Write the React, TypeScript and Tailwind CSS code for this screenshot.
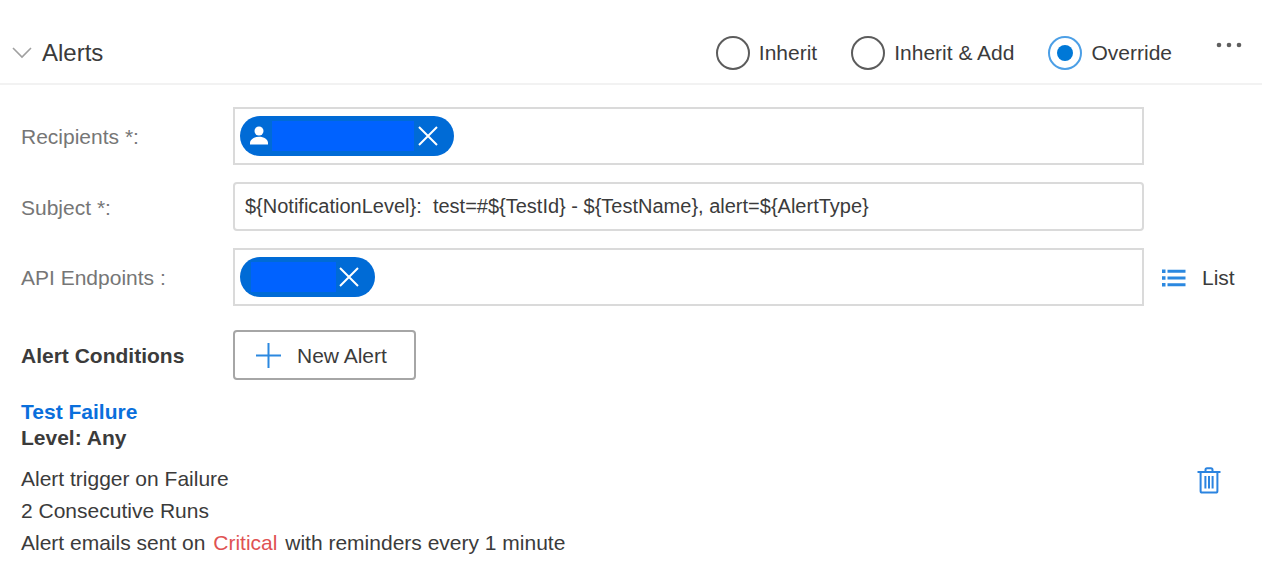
import { useState } from "react";

const modes = ["Inherit", "Inherit & Add", "Override"];

const CloseIcon = () => (
    <svg width="20" height="20" viewBox="0 0 20 20" fill="none" stroke="currentColor" strokeWidth="2" aria-hidden="true">
        <path d="M1 1l18 18M19 1L1 19" />
    </svg>
);

const ListIcon = () => (
    <svg width="24" height="18" viewBox="0 0 24 18" fill="currentColor" aria-hidden="true">
        <path d="M0 0.500h3.500v3.500H0zM5.500 0.800h18v3H5.500zM0 7.300h3.500v3.500H0zM5.500 7.500h18v3H5.500zM0 14h3.500v3.500H0zM5.500 14.200h18v3H5.500z" />
    </svg>
);

const TrashIcon = () => (
    <svg width="24" height="27" viewBox="0 0 24 27" fill="none" stroke="currentColor" aria-hidden="true">
        <path d="M0.500 5h23" strokeWidth="2" />
        <path d="M8.500 5V2.800c0-1 .6-1.600 1.600-1.600h3.800c1 0 1.600.6 1.600 1.600V5" strokeWidth="2" />
        <path d="M3.600 5v19c0 1 .6 1.600 1.600 1.600h13.600c1 0 1.600-.6 1.600-1.600V5" strokeWidth="2" />
        <path d="M8.400 9v12.500M12 9v12.500M15.600 9v12.500" strokeWidth="2" />
    </svg>
);

const App = () => {
    const [mode, setMode] = useState("Override");
    const [subject, setSubject] = useState("${NotificationLevel}:  test=#${TestId} - ${TestName}, alert=${AlertType}");

    return (
        <main className="bg-white font-['Liberation_Sans',Arial,sans-serif] text-[21px] leading-[26px] text-[#3b3b3b]">
            {/* Section header */}
            <header className="mr-3 flex items-start border-b-2 border-[#f2f2f2] pt-9 pb-[13px] pl-3">
                <button type="button" aria-expanded="true" className="flex h-[34px] items-center gap-2.5">
                    <svg width="20" height="12" viewBox="0 0 20 12" fill="none" stroke="#a0a0a0" strokeWidth="1.6" aria-hidden="true">
                        <path d="M1 1l9 9 9-9" />
                    </svg>
                    <span className="text-2xl">Alerts</span>
                </button>

                <div role="radiogroup" aria-label="Alert mode" className="ml-auto flex gap-[34px]">
                    {modes.map((item) => (
                        <label key={item} className="flex h-[34px] items-center gap-[9px]">
                            <input
                                type="radio"
                                name="mode"
                                value={item}
                                checked={mode === item}
                                onChange={() => setMode(item)}
                                className="grid size-[34px] appearance-none place-items-center rounded-full border-2 border-[#5c5c5c] before:size-4 before:rounded-full checked:border-[#4c9fe6] checked:before:bg-[#0078d7]"
                            />
                            {item}
                        </label>
                    ))}
                </div>

                <button type="button" aria-label="More options" className="mr-5 ml-11 flex h-[18px] items-center">
                    <svg width="26" height="6" viewBox="0 0 26 6" fill="#5f5f5f" aria-hidden="true">
                        <circle cx="3" cy="3" r="2.3" />
                        <circle cx="13" cy="3" r="2.3" />
                        <circle cx="23" cy="3" r="2.3" />
                    </svg>
                </button>
            </header>

            {/* Fields */}
            <div className="grid grid-cols-[212px_1fr_130px] items-center gap-y-[17px] pt-[22px] pl-[21px]">
                <label htmlFor="recipients" className="pt-0.5 text-[#767676]">Recipients *:</label>
                <div className="flex h-[58px] items-center border-2 border-[#dadada] px-[5px]">
                    <div className="flex h-10 shrink-0 items-center rounded-full bg-[#006bd6] pr-4 pl-[9px] text-white">
                        <svg width="20" height="20" viewBox="0 0 20 20" fill="currentColor" aria-hidden="true">
                            <circle cx="10" cy="5" r="4.5" />
                            <path d="M1 18.500v-1.500c0-3.600 4-6.200 9-6.200s9 2.600 9 6.200v1.500z" />
                        </svg>
                        <span className="mr-1 ml-[3px] h-[30px] w-[142px] bg-[#0062ff]" />
                        <button type="button" aria-label="Remove recipient">
                            <CloseIcon />
                        </button>
                    </div>
                    <input id="recipients" type="text" className="min-w-0 flex-1 px-2 outline-none" />
                </div>
                <span />

                <label htmlFor="subject" className="pt-0.5 text-[#767676]">Subject *:</label>
                <input
                    id="subject"
                    type="text"
                    value={subject}
                    onChange={(e) => setSubject(e.target.value)}
                    className="h-[49px] w-full min-w-0 rounded-sm border-2 border-[#dadada] px-2.5 text-xl outline-none"
                />
                <span />

                <label htmlFor="endpoints" className="pt-0.5 text-[#767676]">API Endpoints :</label>
                <div className="flex h-[58px] items-center border-2 border-[#dadada] px-[5px]">
                    <div className="flex h-10 shrink-0 items-center rounded-full bg-[#006bd6] pr-4 pl-[11px] text-white">
                        <span className="mr-[3px] h-[30px] w-[85px] bg-[#0062ff]" />
                        <button type="button" aria-label="Remove endpoint">
                            <CloseIcon />
                        </button>
                    </div>
                    <input id="endpoints" type="text" className="min-w-0 flex-1 px-2 outline-none" />
                </div>
                <button type="button" className="ml-[18px] flex items-center gap-4 pt-0.5">
                    <span className="text-[#2b88e0]"><ListIcon /></span>
                    List
                </button>
            </div>

            {/* Conditions */}
            <section className="pt-6 pr-[53px] pl-[21px]">
                <div className="flex items-center">
                    <h2 className="w-[212px] pt-0.5 font-bold">Alert Conditions</h2>
                    <button type="button" className="flex h-[50px] items-center gap-4 rounded-sm border-2 border-[#a6a6a6] pr-[27px] pl-[21px]">
                        <svg width="25" height="25" viewBox="0 0 25 25" fill="none" stroke="#2b88e0" strokeWidth="2" aria-hidden="true">
                            <path d="M12.500 0v25M0 12.500h25" />
                        </svg>
                        <span className="pt-0.5">New Alert</span>
                    </button>
                </div>

                <div className="mt-[19px] font-bold">
                    <a href="#test-failure" className="text-[#0a6fdc]">Test Failure</a>
                    <p>Level: Any</p>
                </div>

                <div className="mt-3 flex items-start justify-between leading-8">
                    <div>
                        <p>Alert trigger on Failure</p>
                        <p>2 Consecutive Runs</p>
                        <p>
                            Alert emails sent on <span className="mx-0.5 text-[#e05252]">Critical</span> with reminders every 1 minute
                        </p>
                    </div>
                    <button type="button" aria-label="Delete alert" className="mt-1 text-[#2b84e0]">
                        <TrashIcon />
                    </button>
                </div>
            </section>
        </main>
    );
};

export default App;
